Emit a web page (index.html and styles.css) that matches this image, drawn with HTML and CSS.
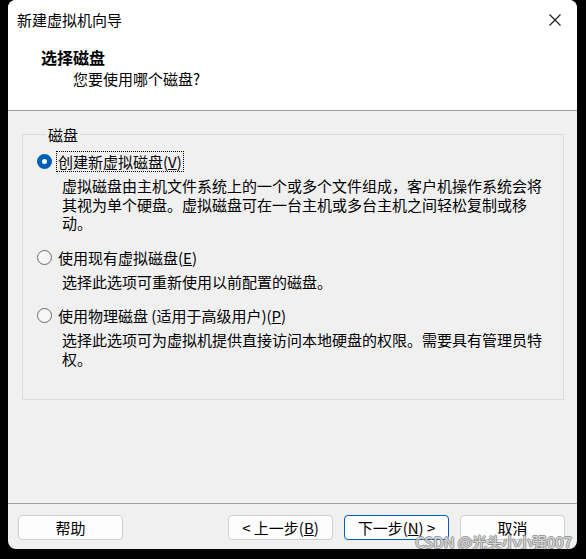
FILE: index.html
```html
<!DOCTYPE html>
<html lang="zh-CN">
<head>
    <meta charset="UTF-8">
    <meta name="viewport" content="width=device-width, initial-scale=1.0">
    <title>新建虚拟机向导</title>
    <link rel="stylesheet" href="styles.css">
</head>
<body>
    <div class="window">
        <div class="top">
            <div class="titlebar">
                <span class="title">新建虚拟机向导</span>
                <span class="close-btn">
                    <svg width="12" height="12" viewBox="0 0 12 12">
                        <path d="M0.5 0.5 L11.5 11.5 M11.5 0.5 L0.5 11.5" stroke="#1a1a1a" stroke-width="1.1" fill="none"/>
                    </svg>
                </span>
            </div>
            <div class="header">
                <div class="header-title">选择磁盘</div>
                <div class="header-sub">您要使用哪个磁盘?</div>
            </div>
        </div>

        <div class="body">
            <fieldset class="group">
                <legend>磁盘</legend>
                <div class="option">
                    <label class="option-row">
                        <input type="radio" name="disk" checked>
                        <span class="option-label focused">创建新虚拟磁盘(<u>V</u>)</span>
                    </label>
                    <div class="option-desc">虚拟磁盘由主机文件系统上的一个或多个文件组成，客户机操作系统会将其视为单个硬盘。虚拟磁盘可在一台主机或多台主机之间轻松复制或移动。</div>
                </div>
                <div class="option">
                    <label class="option-row">
                        <input type="radio" name="disk">
                        <span class="option-label">使用现有虚拟磁盘(<u>E</u>)</span>
                    </label>
                    <div class="option-desc">选择此选项可重新使用以前配置的磁盘。</div>
                </div>
                <div class="option">
                    <label class="option-row">
                        <input type="radio" name="disk">
                        <span class="option-label">使用物理磁盘 (适用于高级用户)(<u>P</u>)</span>
                    </label>
                    <div class="option-desc">选择此选项可为虚拟机提供直接访问本地硬盘的权限。需要具有管理员特权。</div>
                </div>
            </fieldset>
        </div>

        <div class="footer">
            <button class="btn">帮助</button>
            <div class="nav-buttons">
                <button class="btn">&lt; 上一步(<u>B</u>)</button>
                <button class="btn btn-default">下一步(<u>N</u>) &gt;</button>
                <button class="btn cancel">取消</button>
            </div>
        </div>

        <div class="watermark">CSDN @光头小小强007</div>
    </div>
</body>
</html>
```

FILE: styles.css
```css
body, html {
    margin: 0;
    padding: 0;
    background-color: #000;
    font-family: "Noto Sans CJK SC", "Noto Sans", sans-serif;
    font-size: 15px;
    color: #000;
}
.window {
    position: relative;
    margin-left: 8px;
    width: 569px;
    height: 549px;
    background-color: #f0f0f0;
    border-radius: 8px;
    display: flex;
    flex-direction: column;
}
.top {
    background-color: #fff;
    height: 110px;
    border-bottom: 1px solid #a0a0a0;
    border-radius: 8px 8px 0 0;
}
.titlebar {
    height: 40px;
    display: flex;
    align-items: center;
    justify-content: space-between;
    padding: 0 16px 0 9px;
}
.title {
    line-height: 40px;
}
.close-btn {
    display: flex;
}
.header {
    padding: 7px 0 0 33px;
}
.header-title {
    font-weight: bold;
    font-size: 16px;
    line-height: 20px;
}
.header-sub {
    line-height: 20px;
    margin-top: 2px;
    padding-left: 32px;
}
.body {
    flex: 1;
    padding: 14px 13px 0 14px;
}
.group {
    margin: 0;
    padding: 8px 0 0 14px;
    border: 1px solid #dcdcdc;
    height: 275px;
    box-sizing: border-box;
}
.group legend {
    margin-left: 9px;
    padding: 0 2px;
    line-height: 19px;
}
.option {
    margin-bottom: 15px;
}
.option-row {
    display: flex;
    align-items: center;
    line-height: 19px;
}
.option-row input {
    appearance: none;
    -webkit-appearance: none;
    flex-shrink: 0;
    margin: 0 5px 0 0;
    width: 15px;
    height: 15px;
    border-radius: 50%;
    border: 1px solid #6a6a6a;
    background-color: #f6f6f6;
    box-sizing: border-box;
}
.option-row input:checked {
    border: 5px solid #005fb8;
    background-color: #fff;
}
.option-label {
    padding: 0 1px;
}
.option-label.focused {
    outline: 1px dotted #000;
}
.option-desc {
    margin: 6px 0 0 25px;
    width: 480px;
    line-height: 18.5px;
}
.footer {
    border-top: 1px solid #a0a0a0;
    height: 46px;
    box-sizing: border-box;
    display: flex;
    justify-content: space-between;
    padding: 11px 12px 0 10px;
}
.nav-buttons {
    display: flex;
}
.btn {
    width: 105px;
    height: 25px;
    background-color: #fdfdfd;
    border: 1px solid #d0d0d0;
    border-radius: 4px;
    font-family: inherit;
    font-size: 15px;
    color: #000;
    padding: 0;
    line-height: 22px;
}
.btn-default {
    margin-left: 11px;
    border-color: #005fb8;
}
.cancel {
    margin-left: 11px;
}
.watermark {
    position: absolute;
    right: 5px;
    bottom: -2px;
    font-size: 15px;
    line-height: 19px;
    color: #d4d4d4;
    text-shadow: 1px 0 0 #8a8a8a, -1px 0 0 #8a8a8a, 0 1px 0 #8a8a8a, 0 -1px 0 #8a8a8a;
    opacity: 0.85;
}
```
